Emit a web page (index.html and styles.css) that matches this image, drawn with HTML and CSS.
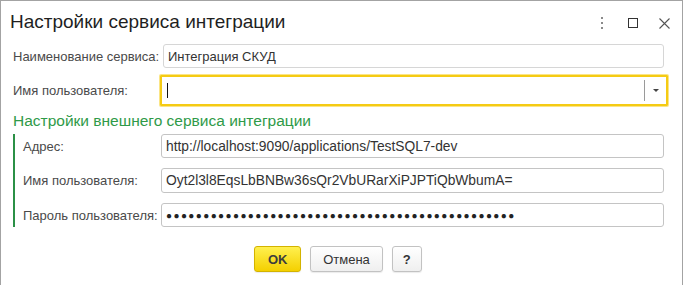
FILE: index.html
```html
<!DOCTYPE html>
<html lang="ru">
<head>
    <meta charset="UTF-8">
    <title>Настройки сервиса интеграции</title>
    <link rel="stylesheet" href="styles.css">
</head>
<body>
    <div class="window">
        <div class="titlebar">
            <h1>Настройки сервиса интеграции</h1>
            <div class="win-controls">
                <svg class="icon-more" width="4" height="12" viewBox="0 0 4 12">
                    <rect x="1" y="0" width="2" height="2" fill="#8a8a8a"/>
                    <rect x="1" y="5" width="2" height="2" fill="#8a8a8a"/>
                    <rect x="1" y="10" width="2" height="2" fill="#8a8a8a"/>
                </svg>
                <svg class="icon-max" width="10" height="10" viewBox="0 0 10 10">
                    <rect x="0.5" y="0.5" width="9" height="9" fill="none" stroke="#333" stroke-width="1"/>
                </svg>
                <svg class="icon-close" width="11" height="11" viewBox="0 0 11 11">
                    <path d="M0.5 0.5 L10.5 10.5 M10.5 0.5 L0.5 10.5" stroke="#555" stroke-width="1.1"/>
                </svg>
            </div>
        </div>

        <div class="form">
            <div class="row">
                <div class="label">Наименование сервиса:</div>
                <div class="field readonly">Интеграция СКУД</div>
            </div>
            <div class="row row-focus">
                <div class="label">Имя пользователя:</div>
                <div class="field focused">
                    <span class="caret"></span>
                    <span class="dropdown"><span class="arrow"></span></span>
                </div>
            </div>

            <div class="group-title">Настройки внешнего сервиса интеграции</div>
            <div class="group">
                <div class="row">
                    <div class="label">Адрес:</div>
                    <div class="field latin">http://localhost:9090/applications/TestSQL7-dev</div>
                </div>
                <div class="row">
                    <div class="label">Имя пользователя:</div>
                    <div class="field latin">Oyt2l3l8EqsLbBNBw36sQr2VbURarXiPJPTiQbWbumA=</div>
                </div>
                <div class="row">
                    <div class="label">Пароль пользователя:</div>
                    <div class="field password">●●●●●●●●●●●●●●●●●●●●●●●●●●●●●●●●●●●●●●●●●●●●●●●</div>
                </div>
            </div>
        </div>

        <div class="buttons">
            <button class="btn btn-ok">OK</button>
            <button class="btn">Отмена</button>
            <button class="btn btn-help">?</button>
        </div>
    </div>
</body>
</html>
```

FILE: styles.css
```css
* {
    margin: 0;
    padding: 0;
    box-sizing: border-box;
}

body {
    font-family: "Liberation Sans", Arial, sans-serif;
    background-color: white;
    color: #333;
}

.window {
    width: 683px;
    height: 285px;
    border: 1px solid #a3a3a3;
    border-bottom: none;
    background-color: white;
}

.titlebar {
    display: flex;
    align-items: flex-start;
    justify-content: space-between;
    height: 41px;
    padding: 10px 0 0 9px;
}

h1 {
    font-size: 19px;
    font-weight: normal;
    line-height: 22px;
    color: #1f1f1f;
}

.win-controls {
    display: flex;
    align-items: center;
    margin-top: 6px;
    margin-right: 12px;
}

.icon-more {
    margin-right: 24px;
}

.icon-max {
    margin-right: 21px;
}

.form {
    padding: 2px 18px 0 12px;
}

.row {
    display: flex;
    align-items: center;
    height: 24px;
}

.label {
    width: 150px;
    flex-shrink: 0;
    font-size: 13px;
    color: #4a4a4a;
}

.field {
    flex: 1;
    height: 100%;
    display: flex;
    align-items: center;
    padding-left: 4px;
    border: 1px solid #c4c4c4;
    border-radius: 3px;
    font-size: 13px;
    color: #333;
    white-space: nowrap;
    overflow: hidden;
}

.field.latin {
    font-size: 13.8px;
}

.field.readonly {
    border-color: #d6d6d6;
}

.row-focus {
    height: 31px;
    margin-top: 7px;
}

.row-focus .label {
    width: 147px;
}

.field.focused {
    margin-right: -4px;
    border: 2px solid #f5cb14;
    border-radius: 1px;
    box-shadow: 0 0 0 1px #fbe585;
    padding-left: 5px;
    position: relative;
}

.caret {
    display: block;
    width: 1px;
    height: 15px;
    background-color: #111;
}

.dropdown {
    position: absolute;
    right: 0;
    top: 3px;
    bottom: 3px;
    width: 22px;
    border-left: 1px solid #9a9a9a;
    display: flex;
    align-items: center;
    justify-content: center;
}

.arrow {
    width: 0;
    height: 0;
    border-left: 3px solid transparent;
    border-right: 3px solid transparent;
    border-top: 3px solid #444;
}

.group-title {
    margin-top: 6px;
    font-size: 15.5px;
    line-height: 18px;
    color: #2f9a48;
}

.group {
    margin-top: 4px;
    padding-left: 8px;
    border-left: 2px solid #2b9046;
    display: flex;
    flex-direction: column;
    gap: 10px;
}

.group .label {
    width: 138px;
}

.group .row:nth-child(2) {
    height: 25px;
}

.field.password {
    font-size: 10px;
    letter-spacing: 1.4px;
    color: #222;
}

.buttons {
    display: flex;
    justify-content: center;
    gap: 9px;
    margin-top: 19px;
    padding-right: 7px;
}

.btn {
    height: 26px;
    min-width: 30px;
    padding: 0 12px;
    border: 1px solid #c2c2c2;
    border-radius: 3px;
    background: linear-gradient(#ffffff, #efefef);
    box-shadow: 0 1px 1px rgba(0,0,0,0.08);
    font-family: "Liberation Sans", Arial, sans-serif;
    font-size: 13px;
    color: #333;
    cursor: pointer;
}

.btn-ok {
    width: 47px;
    font-weight: bold;
    color: #3d3d3d;
    border-color: #d3b300;
    background: linear-gradient(#fff04f, #f4d000);
}

.btn-help {
    width: 30px;
    padding: 0;
    font-weight: bold;
}
```
